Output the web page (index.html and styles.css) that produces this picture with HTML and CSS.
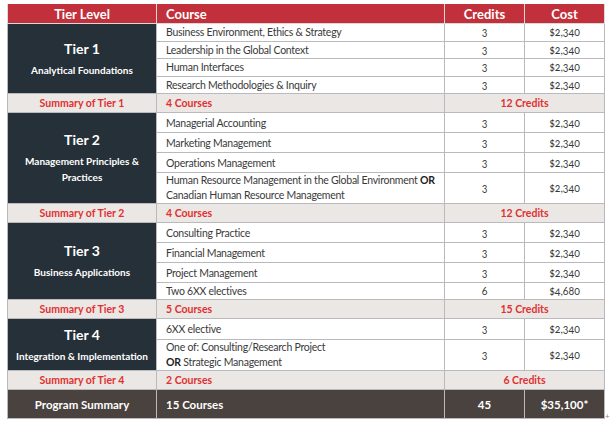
FILE: index.html
```html
<!DOCTYPE html>
<html>
<head>
<meta charset="utf-8">
<link rel="stylesheet" href="styles.css">
</head>
<body>
<div class="wrap">
<table class="grid">
  <colgroup>
    <col class="c1"><col class="c2"><col class="c3"><col class="c4">
  </colgroup>
  <thead>
    <tr class="head">
      <th>Tier Level</th><th class="left">Course</th><th>Credits</th><th>Cost</th>
    </tr>
  </thead>
  <tbody>
    <tr class="r17">
      <td class="tier" rowspan="4"><div class="tt">Tier 1</div><div class="ts">Analytical Foundations</div></td>
      <td class="course">Business Environment, Ethics &amp; Strategy</td><td class="num">3</td><td class="num">$2,340</td>
    </tr>
    <tr class="r17"><td class="course">Leadership in the Global Context</td><td class="num">3</td><td class="num">$2,340</td></tr>
    <tr class="r17"><td class="course">Human Interfaces</td><td class="num">3</td><td class="num">$2,340</td></tr>
    <tr class="r17"><td class="course">Research Methodologies &amp; Inquiry</td><td class="num">3</td><td class="num">$2,340</td></tr>
    <tr class="sum"><td class="sl">Summary of Tier 1</td><td class="sc">4 Courses</td><td class="scr" colspan="2">12 Credits</td></tr>

    <tr class="r20">
      <td class="tier" rowspan="4"><div class="tt">Tier 2</div><div class="ts">Management Principles &amp;<br>Practices</div></td>
      <td class="course">Managerial Accounting</td><td class="num">3</td><td class="num">$2,340</td>
    </tr>
    <tr class="r20"><td class="course">Marketing Management</td><td class="num">3</td><td class="num">$2,340</td></tr>
    <tr class="r20"><td class="course">Operations Management</td><td class="num">3</td><td class="num">$2,340</td></tr>
    <tr class="r30"><td class="course two">Human Resource Management in the Global Environment <b>OR</b><br>Canadian Human Resource Management</td><td class="num">3</td><td class="num">$2,340</td></tr>
    <tr class="sum"><td class="sl">Summary of Tier 2</td><td class="sc">4 Courses</td><td class="scr" colspan="2">12 Credits</td></tr>

    <tr class="r20">
      <td class="tier" rowspan="4"><div class="tt">Tier 3</div><div class="ts">Business Applications</div></td>
      <td class="course">Consulting Practice</td><td class="num">3</td><td class="num">$2,340</td>
    </tr>
    <tr class="r20"><td class="course">Financial Management</td><td class="num">3</td><td class="num">$2,340</td></tr>
    <tr class="r20"><td class="course">Project Management</td><td class="num">3</td><td class="num">$2,340</td></tr>
    <tr class="r16"><td class="course">Two 6XX electives</td><td class="num">6</td><td class="num">$4,680</td></tr>
    <tr class="sum"><td class="sl">Summary of Tier 3</td><td class="sc">5 Courses</td><td class="scr" colspan="2">15 Credits</td></tr>

    <tr class="r21">
      <td class="tier" rowspan="2"><div class="tt">Tier 4</div><div class="ts">Integration &amp; Implementation</div></td>
      <td class="course">6XX elective</td><td class="num">3</td><td class="num">$2,340</td>
    </tr>
    <tr class="r31"><td class="course two">One of: Consulting/Research Project<br><b>OR</b> Strategic Management</td><td class="num">3</td><td class="num">$2,340</td></tr>
    <tr class="sum"><td class="sl">Summary of Tier 4</td><td class="sc">2 Courses</td><td class="scr" colspan="2">6 Credits</td></tr>

    <tr class="prog"><td>Program Summary</td><td class="left">15 Courses</td><td>45</td><td>$35,100*</td></tr>
  </tbody>
</table>
<span class="mark">+</span>
</div>
</body>
</html>
```

FILE: styles.css
```css
html, body {
  margin: 0;
  padding: 0;
  background: #ffffff;
}
body {
  font-family: Lato, "Open Sans", "Liberation Sans", sans-serif;
}
.wrap {
  position: relative;
  padding: 4px 0 0 7px;
}
.grid {
  border-collapse: collapse;
  table-layout: fixed;
  width: 597px;
}
.c1 { width: 149px; }
.c2 { width: 288px; }
.c3 { width: 80px; }
.c4 { width: 80px; }

.grid td, .grid th {
  border: 1.5px solid #b9b9be;
  padding: 0;
  text-align: center;
  vertical-align: middle;
}
.head th {
  background: #c2313b;
  color: #ffffff;
  font-size: 13px;
  font-weight: 700;
  height: 19px;
  border-color: #d9d9dc;
  border-top: none;
}
.head th.left, .prog td.left {
  text-align: left;
  padding-left: 9px;
}
.r16 td { height: 16px; }
.r17 td { height: 16.5px; }
.r20 td { height: 19px; }
.r21 td { height: 20px; }
.r30 td { height: 29px; }
.r31 td { height: 30px; }

.tier {
  background: #263038;
  color: #ffffff;
}
.tt {
  font-size: 14px;
  font-weight: 700;
  line-height: 18px;
  margin-bottom: 4px;
}
.ts {
  font-size: 10px;
  font-weight: 700;
  line-height: 16px;
}
.course {
  text-align: left !important;
  padding-left: 9px !important;
  font-size: 10.5px;
  letter-spacing: -0.25px;
  color: #3a3a3a;
  white-space: nowrap;
}
.course.two {
  line-height: 15px;
}
.course b {
  color: #222;
}
.num {
  font-size: 10.5px;
  color: #3a3a3a;
  font-variant-numeric: oldstyle-nums;
}
.sum td {
  background: #ebe7e4;
  color: #e0302f;
  font-size: 10.5px;
  font-weight: 700;
  height: 18px;
}
.sum td.sc {
  text-align: left;
  padding-left: 9px;
}
.prog td {
  background: #4a423e;
  color: #ffffff;
  font-size: 11.5px;
  font-weight: 700;
  height: 28px;
}
.mark {
  position: absolute;
  left: 605px;
  top: 411px;
  font-size: 8px;
  color: #888;
}
```
